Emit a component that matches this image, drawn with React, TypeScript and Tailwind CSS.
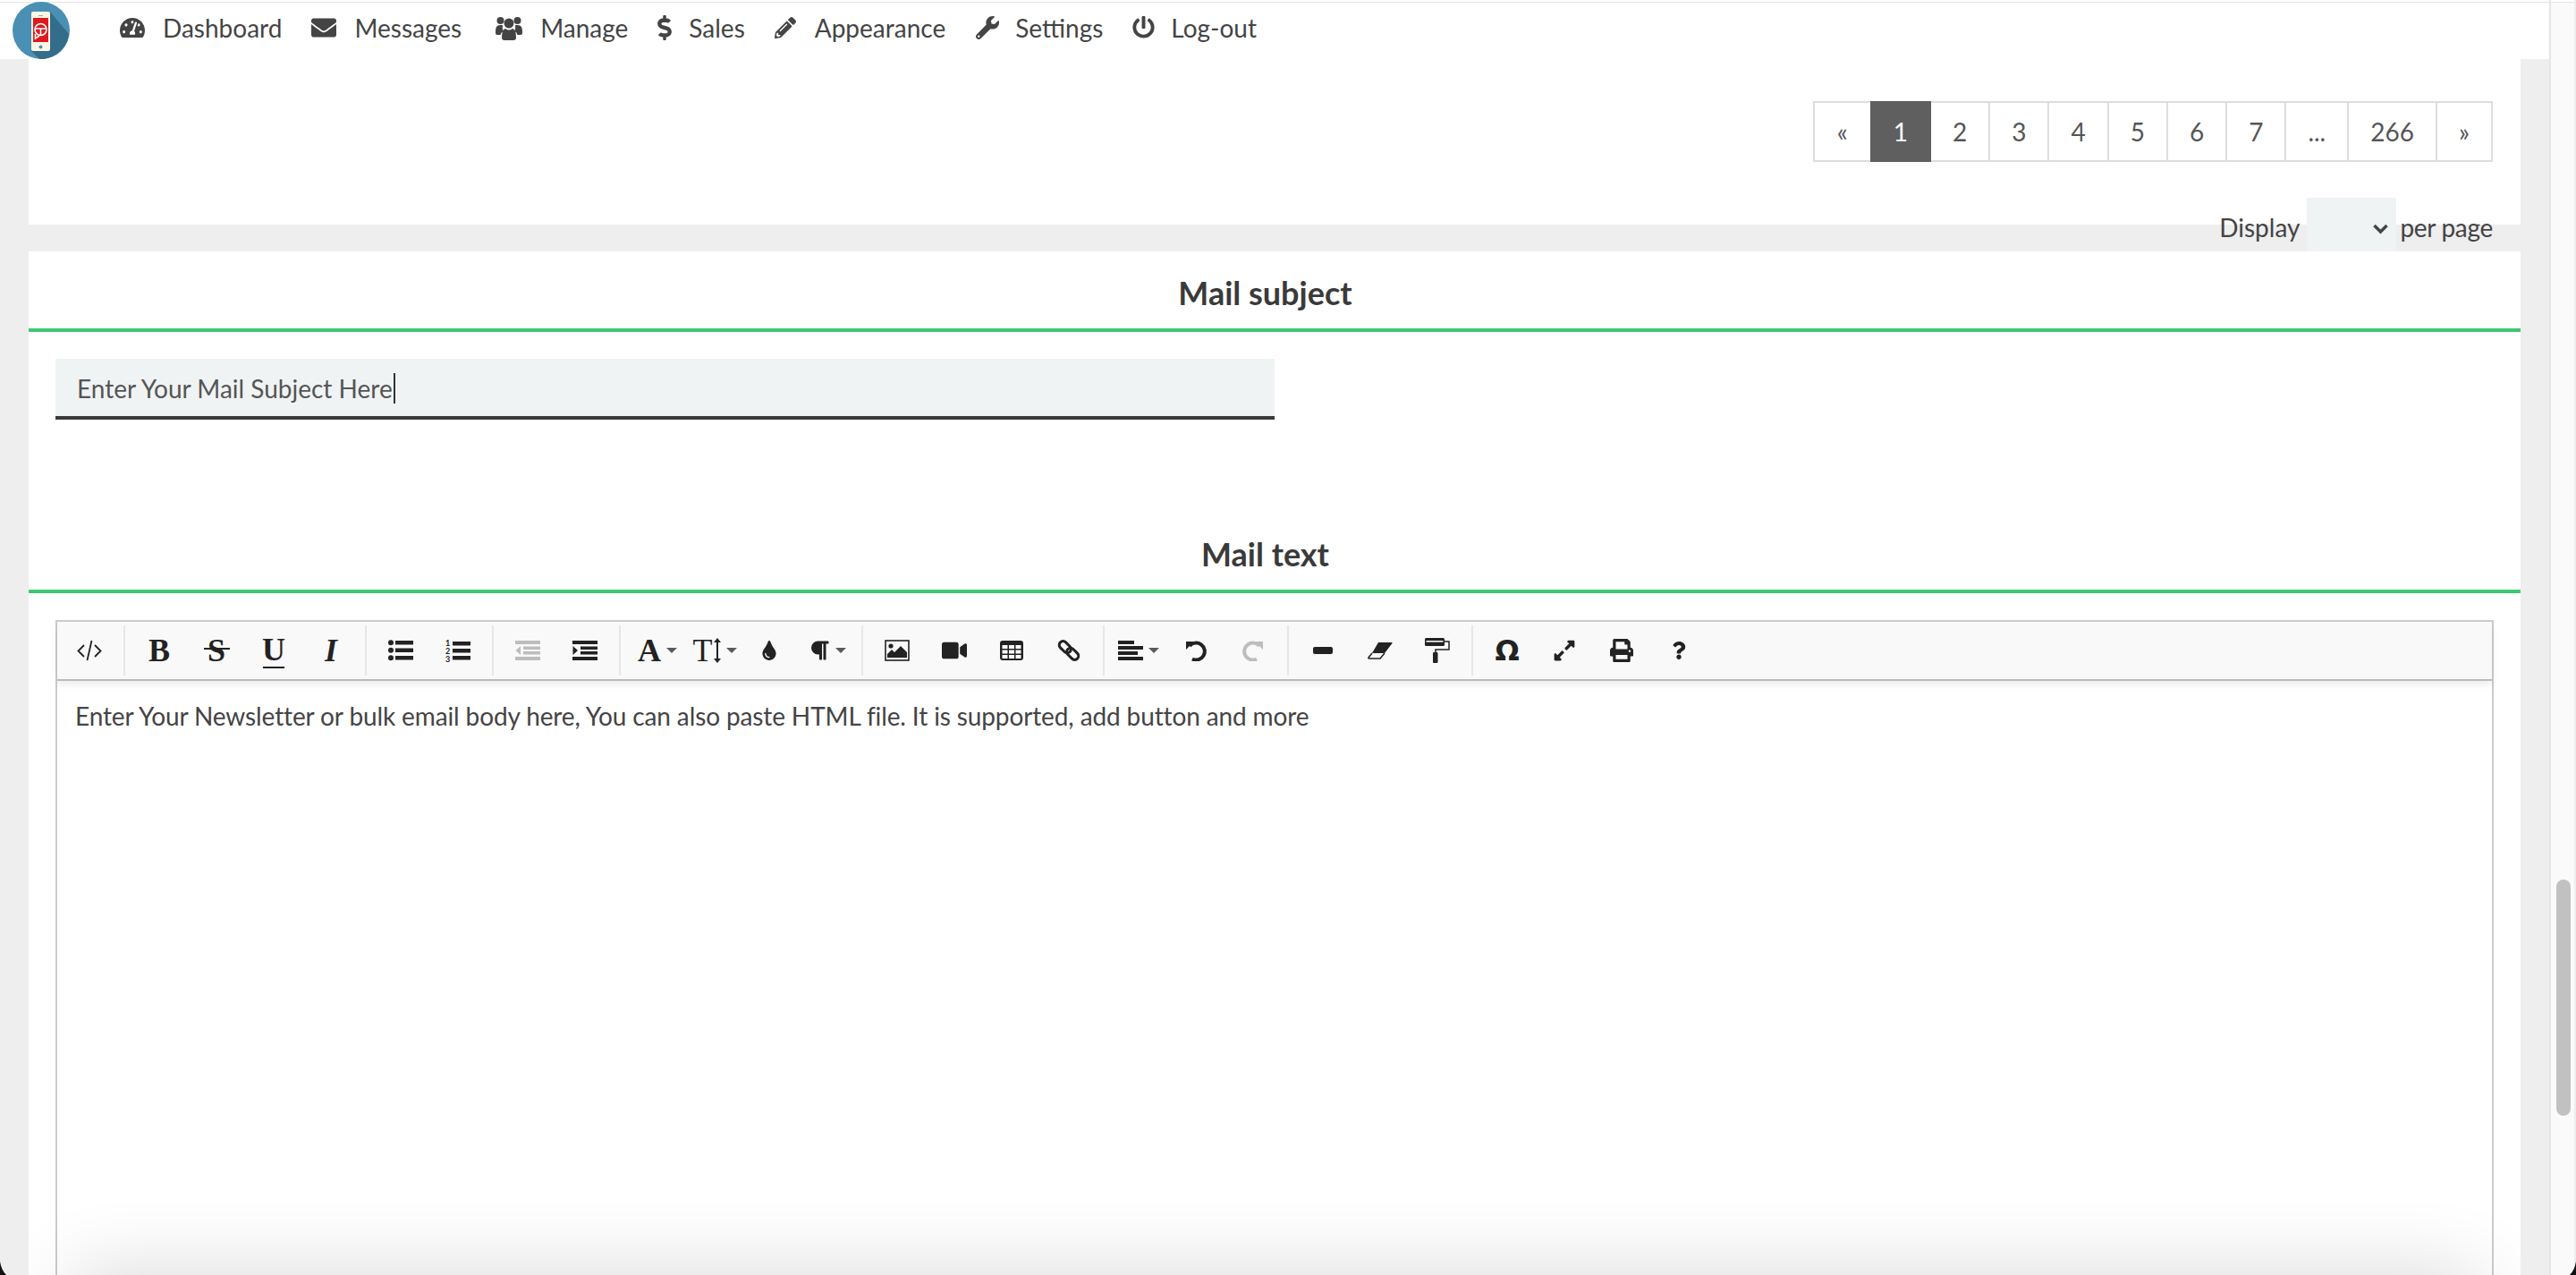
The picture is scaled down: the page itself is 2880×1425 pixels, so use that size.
import type { ReactNode } from 'react'
import {
    FaTachometerAlt, FaEnvelope, FaDollarSign, FaPencilAlt, FaWrench, FaPowerOff,
    FaTint, FaParagraph, FaVideo, FaExpandAlt, FaPrint, FaQuestion,
} from 'react-icons/fa'

function UsersIcon() {
    return (
        <svg viewBox="0 0 30 28" className="w-[30px] h-[28px]" fill="currentColor">
            <circle cx="5.5" cy="6" r="4" />
            <circle cx="24.5" cy="6" r="4" />
            <circle cx="15" cy="9" r="5.5" />
            <path d="M0 18 Q0 11 5 11 L8 11 Q7 15 9 18 Q6 19 5.500 22 L2 22 Q0 22 0 20 Z" />
            <path d="M30 18 Q30 11 25 11 L22 11 Q23 15 21 18 Q24 19 24.500 22 L28 22 Q30 22 30 20 Z" />
            <path d="M7 25 Q7 16 11 15 Q15 18 19 15 Q23 16 23 25 Q23 28 20 28 L10 28 Q7 28 7 25 Z" />
        </svg>
    )
}

const navItems = [
    { label: 'Dashboard', icon: <FaTachometerAlt size={28} />, w: 'w-[28px] justify-center', gap: 'mr-[20px]' },
    { label: 'Messages', icon: <FaEnvelope size={28} />, w: 'w-[28px] justify-center', gap: 'mr-[20px]' },
    { label: 'Manage', icon: <UsersIcon />, w: 'w-[35px] justify-end', gap: 'mr-[20px]' },
    { label: 'Sales', icon: <FaDollarSign size={28} />, w: 'w-[16px] justify-center', gap: 'mr-[19px]' },
    { label: 'Appearance', icon: <FaPencilAlt size={24} />, w: 'w-[24px] justify-center', gap: 'mr-[21px]' },
    { label: 'Settings', icon: <FaWrench size={26} />, w: 'w-[27px] justify-center', gap: 'mr-[18px]' },
    { label: 'Log-out', icon: <FaPowerOff size={25} />, w: 'w-[25px] justify-center', gap: 'mr-[18px]' },
]

const pages = ['«', '1', '2', '3', '4', '5', '6', '7', '...', '266', '»']

function Logo() {
    return (
        <svg viewBox="0 0 64 64" className="w-[64px] h-[64px]">
            <circle cx="32" cy="32" r="32" fill="#4a90b4" />
            <path d="M42 11 L63 36 A32 32 0 0 1 35 64 A32 32 0 0 1 30 64 L21 55 Z" fill="#346d8a" />
            <rect x="21" y="11" width="21" height="44" rx="2" fill="#fdf6e3" />
            <rect x="23" y="18" width="17" height="27" fill="#dc1a20" />
            <rect x="29" y="15" width="5" height="1" fill="#8fb0c0" />
            <circle cx="31.5" cy="50.500" r="2" fill="#4a90b4" />
            <circle cx="31.500" cy="31" r="6.500" fill="none" stroke="#fff" strokeWidth="1.600" />
            <path d="M25.500 30 H37.500 M31.500 30 V37 M25.500 36 L25.500 41 L30 38" stroke="#fff" strokeWidth="1.600" fill="none" />
        </svg>
    )
}

function Header() {
    return (
        <div className="relative h-[66px] shrink-0 bg-white shadow-[inset_0_2px_0_#fff,inset_0_3px_0_#e5e5e5] pl-[134px] pb-[5px] flex items-center gap-[33px]">
            <div className="absolute left-[14px] top-[2px]">
                <Logo />
            </div>
            {navItems.map(({ label, icon, w, gap }) => (
                <div key={label} className="flex items-center">
                    <span className={`flex ${w} ${gap}`}>{icon}</span>
                    <span>{label}</span>
                </div>
            ))}
        </div>
    )
}

function Pagination() {
    return (
        <div className="flex justify-end pt-[47px] pr-[31px]">
            {pages.map((p, i) => (
                <span
                    key={i}
                    className={`h-[68px] flex items-center justify-center border-2 ${i > 0 ? '-ml-[2px]' : ''} ${
                        p === '1' ? 'bg-[#5f5f5f] border-[#5f5f5f] text-white z-10' : 'bg-white border-[#ddd] text-[#555]'
                    } ${p === '«' ? 'px-[25px]' : 'px-[24px]'}`}
                >
                    {p}
                </span>
            ))}
        </div>
    )
}

function SectionTitle({ children }: { children: ReactNode }) {
    return (
        <div className="h-[90px] pt-[26px] pr-[21px] border-b-4 border-[#3dc871] text-center font-bold text-[36px] leading-[40px] text-[#3a3a3a]">
            {children}
        </div>
    )
}

function Btn({ children, w = 'w-[64px]', caret = false, muted = false }: { children: ReactNode; w?: string; caret?: boolean; muted?: boolean }) {
    return (
        <div className={`${w} h-[56px] flex items-center justify-center gap-[6px] ${muted ? 'text-[#bdbdbd]' : 'text-[#222]'}`}>
            {children}
            {caret && <span className="w-0 h-0 border-x-[6px] border-t-[6px] border-x-transparent border-t-[#5a5a5a]" />}
        </div>
    )
}

const Sep = () => <div className="w-[2px] h-[56px] mx-[6px] bg-[#e7e7e7]" />

// glyphs the editor draws as letters: kept as real text in a serif face
function Letter({ children, className = '' }: { children: ReactNode; className?: string }) {
    return <span className={`[font-family:'Liberation_Serif',serif] text-[36px] leading-none ${className}`}>{children}</span>
}

function ListBars() {
    return (
        <>
            <rect x="8" y="1" width="20" height="4.500" />
            <rect x="8" y="9.500" width="20" height="4.500" />
            <rect x="8" y="18" width="20" height="4.500" />
        </>
    )
}

const CodeIcon = () => (
    <svg viewBox="0 0 28 24" className="w-[28px] h-[24px]" fill="none" stroke="currentColor" strokeWidth="1.800">
        <path d="M8 6 L1.500 12.500 L8 19 M20 6 L26.500 12.500 L20 19 M16.500 1 L11.500 23" />
    </svg>
)

const UlIcon = () => (
    <svg viewBox="0 0 28 24" className="w-[28px] h-[24px]" fill="currentColor">
        <circle cx="3" cy="3.200" r="3" />
        <circle cx="3" cy="11.700" r="3" />
        <circle cx="3" cy="20.200" r="3" />
        <ListBars />
    </svg>
)

const OlIcon = () => (
    <svg viewBox="0 0 28 26" className="w-[28px] h-[26px] overflow-visible" fill="currentColor">
        <rect x="8" y="3" width="20" height="4.500" />
        <rect x="8" y="11" width="20" height="4.500" />
        <rect x="8" y="19" width="20" height="4.500" />
        <text x="0" y="8" fontSize="9" fontWeight="700" fontFamily="Lato">1</text>
        <text x="0" y="17" fontSize="9" fontWeight="700" fontFamily="Lato">2</text>
        <text x="0" y="26" fontSize="9" fontWeight="700" fontFamily="Lato">3</text>
    </svg>
)

const IndentIcon = ({ out = false }: { out?: boolean }) => (
    <svg viewBox="0 0 28 22" className="w-[28px] h-[22px]" fill="currentColor">
        <rect x="0" y="0" width="28" height="4" />
        <rect x="9" y="6.500" width="19" height="3.500" />
        <rect x="9" y="12" width="19" height="3.500" />
        <rect x="0" y="18" width="28" height="4" />
        <path d={out ? 'M6 6 V16 L0.500 11 Z' : 'M0.500 6 V16 L6 11 Z'} />
    </svg>
)

const TextHeightIcon = () => (
    <span className="flex items-center gap-[1px]">
        <Letter className="text-[34px]">T</Letter>
        <svg viewBox="0 0 8 28" className="w-[8px] h-[28px]" fill="currentColor">
            <path d="M4 0 L8 5 H5 V23 H8 L4 28 L0 23 H3 V5 H0 Z" />
        </svg>
    </span>
)

const ImageIcon = () => (
    <svg viewBox="0 0 28 24" className="w-[28px] h-[24px]" fill="currentColor">
        <rect x="1" y="1" width="26" height="22" fill="none" stroke="currentColor" strokeWidth="1.600" />
        <circle cx="7" cy="7" r="2.600" />
        <path d="M3 20 V16 L8 11 L11 14 L18 7 L25 14 V20 Z" />
    </svg>
)

const TableIcon = () => (
    <svg viewBox="0 0 26 22" className="w-[26px] h-[22px]">
        <rect width="26" height="22" rx="3" fill="currentColor" />
        {[2.5, 10, 17.500].map((x) =>
            [5, 10.500, 16].map((y) => <rect key={`${x}-${y}`} x={x} y={y} width="6" height="4" fill="#f9f9f9" />),
        )}
    </svg>
)

const LinkIcon = () => (
    <svg viewBox="0 0 26 26" className="w-[26px] h-[26px]" fill="none" stroke="currentColor" strokeWidth="3">
        <rect x="1.500" y="5" width="15" height="8.500" rx="4.200" transform="rotate(45 9 9)" />
        <rect x="9.500" y="12.500" width="15" height="8.500" rx="4.200" transform="rotate(45 17 17)" />
    </svg>
)

const AlignIcon = () => (
    <svg viewBox="0 0 28 22" className="w-[28px] h-[22px]" fill="currentColor">
        <rect x="0" y="0" width="18" height="4" />
        <rect x="0" y="6" width="28" height="4" />
        <rect x="0" y="12" width="22" height="4" />
        <rect x="0" y="18" width="28" height="4" />
    </svg>
)

const UndoIcon = ({ redo = false }: { redo?: boolean }) => (
    <svg viewBox="0 0 24 24" className={`w-[24px] h-[24px] ${redo ? '-scale-x-100' : ''}`}>
        <path d="M5 7 A9.500 9.500 0 1 1 8 21.500" fill="none" stroke="currentColor" strokeWidth="4" />
        <path d="M1 2 L10 2 L1 11 Z" fill="currentColor" />
    </svg>
)

const MinusIcon = () => (
    <svg viewBox="0 0 22 8" className="w-[22px] h-[8px]">
        <rect width="22" height="8" rx="2" fill="currentColor" />
    </svg>
)

const EraserIcon = () => (
    <svg viewBox="0 0 28 20" className="w-[28px] h-[20px]">
        <path d="M12 1 H27 Q28 1 27.500 2 L19 13 H5 Z" fill="currentColor" />
        <path d="M5 13 L1 18 Q0.500 19 2 19 H14 L19 13" fill="none" stroke="currentColor" strokeWidth="1.500" />
    </svg>
)

const RollerIcon = () => (
    <svg viewBox="0 0 28 28" className="w-[28px] h-[28px]" fill="currentColor">
        <rect x="0" y="0" width="22" height="9" rx="1.500" />
        <rect x="1.500" y="3" width="19" height="1.600" fill="#f9f9f9" />
        <path d="M22 4 H27 V13 H12 V16" fill="none" stroke="currentColor" strokeWidth="1.500" />
        <rect x="9" y="16" width="5.500" height="12" rx="1" />
    </svg>
)

function Toolbar() {
    return (
        <div className="h-[66px] bg-[#f9f9f9] border-b-2 border-[#bbb] pl-[4px] flex items-center shadow-[0_4px_8px_rgba(0,0,0,0.08)]">
            <Btn><CodeIcon /></Btn>
            <Sep />
            <Btn><Letter className="font-bold">B</Letter></Btn>
            <Btn>
                <span className="relative flex justify-center w-[29px]">
                    <Letter className="text-[32px] font-bold">S</Letter>
                    <span className="absolute left-0 right-0 top-[15px] h-[2px] bg-[#222]" />
                </span>
            </Btn>
            <Btn>
                <span className="flex flex-col items-center">
                    <Letter className="text-[30px] leading-[24px] font-bold">U</Letter>
                    <span className="w-[24px] h-[2px] mt-[1px] bg-[#222]" />
                </span>
            </Btn>
            <Btn><Letter className="italic font-bold">I</Letter></Btn>
            <Sep />
            <Btn><UlIcon /></Btn>
            <Btn><OlIcon /></Btn>
            <Sep />
            <Btn muted><IndentIcon out /></Btn>
            <Btn><IndentIcon /></Btn>
            <Sep />
            <Btn w="w-[70px]" caret><Letter className="font-bold text-[35px]">A</Letter></Btn>
            <Btn w="w-[58px]" caret><TextHeightIcon /></Btn>
            <Btn><FaTint size={22} /></Btn>
            <Btn w="w-[65px]" caret><FaParagraph size={24} /></Btn>
            <Sep />
            <Btn><ImageIcon /></Btn>
            <Btn><FaVideo size={28} /></Btn>
            <Btn><TableIcon /></Btn>
            <Btn><LinkIcon /></Btn>
            <Sep />
            <Btn caret><AlignIcon /></Btn>
            <Btn><UndoIcon /></Btn>
            <Btn muted><UndoIcon redo /></Btn>
            <Sep />
            <Btn><MinusIcon /></Btn>
            <Btn><EraserIcon /></Btn>
            <Btn><RollerIcon /></Btn>
            <Sep />
            <Btn><span className="[font-family:'DejaVu_Sans',sans-serif] font-bold text-[32px] leading-none">Ω</span></Btn>
            <Btn><FaExpandAlt size={26} /></Btn>
            <Btn><FaPrint size={26} /></Btn>
            <Btn><FaQuestion size={20} /></Btn>
        </div>
    )
}

export default function App() {
    return (
        <div className="relative w-[2880px] h-screen overflow-hidden flex bg-[#eee] text-[28px] text-[#444] [font-family:Lato,sans-serif]">
            <div className="w-[2850px] shrink-0 flex flex-col">
                <Header />
                <div className="ml-[32px] w-[2786px] flex-1 bg-white flex flex-col overflow-hidden">
                    <div className="h-[185px] shrink-0">
                        <Pagination />
                    </div>
                    <div className="h-[30px] shrink-0 bg-[#eee] flex justify-end items-end pr-[31px]">
                        <span className="leading-[40px] mb-[7px]">Display</span>
                        <div className="w-[100px] h-[60px] shrink-0 ml-[8px] mr-[4px] bg-[#f0f3f4] flex items-center justify-end pr-[9px] pt-[10px]">
                            <svg viewBox="0 0 17 12" className="w-[17px] h-[12px]" fill="none" stroke="#444" strokeWidth="3.500">
                                <path d="M1.500 2 L8.500 9 L15.500 2" />
                            </svg>
                        </div>
                        <span className="leading-[40px] mb-[7px] tracking-[-0.3px]">per page</span>
                    </div>
                    <SectionTitle>Mail subject</SectionTitle>
                    <div className="ml-[30px] mt-[30px] w-[1363px] h-[68px] shrink-0 bg-[#f0f3f4] border-b-4 border-[#3a3a3a] pl-[24px] pt-[2px] flex items-center text-[#555]">
                        <span>Enter Your Mail Subject Here</span>
                        <span className="w-[2px] h-[34px] ml-[1px] bg-[#333]" />
                    </div>
                    <div className="mt-[104px]">
                        <SectionTitle>Mail text</SectionTitle>
                    </div>
                    <div className="mx-[30px] mt-[30px] flex-1 border-x-2 border-t-2 border-[#ccc] relative">
                        <Toolbar />
                        <div className="pl-[20px] pt-[18px] tracking-[-0.12px]">Enter Your Newsletter or bulk email body here, You can also paste HTML file. It is supported, add button and more</div>
                        <div className="absolute left-[10px] right-[10px] -bottom-[65px] h-[60px] rounded-[80px] shadow-[0_0_90px_rgba(0,0,0,0.2)]" />
                    </div>
                </div>
            </div>
            <div className="flex-1 bg-[#fafafa] border-l-2 border-r-2 border-l-[#e6e6e6] border-r-[#eee] shadow-[inset_0_2px_0_#fff,inset_0_3px_0_#e5e5e5] pt-[983px] pl-[6px]">
                <div className="w-[16px] h-[264px] rounded-full bg-[#c1c1c1]" />
            </div>
            <svg className="absolute left-0 bottom-0 w-[7px] h-[15px]" viewBox="0 0 7 15"><path d="M0 0 C1 6 3 11 7 15 H0 Z" fill="#111" /></svg>
            <svg className="absolute right-0 bottom-0 w-[7px] h-[15px]" viewBox="0 0 7 15"><path d="M7 0 C6 6 4 11 0 15 H7 Z" fill="#111" /></svg>
        </div>
    )
}
